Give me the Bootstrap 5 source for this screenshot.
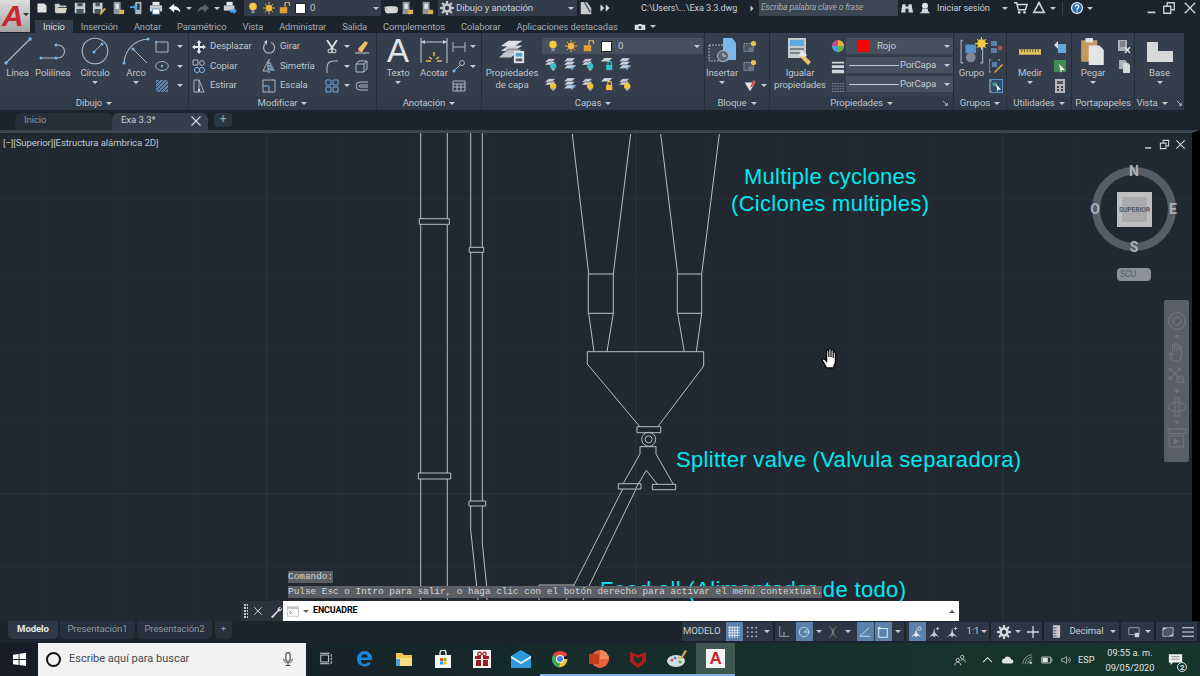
<!DOCTYPE html>
<html lang="es">
<head>
<meta charset="UTF-8">
<title>Exa 3.3 - AutoCAD</title>
<link rel="stylesheet" href="https://cdn.jsdelivr.net/npm/bootstrap@5.3.0/dist/css/bootstrap.min.css">
<style>
html,body{height:676px;overflow:hidden;background:#1c232c}
body{font:9.6px Roboto,sans-serif;letter-spacing:-.1px;color:#bfc5cd;line-height:1.1}
.app-shell{height:676px;width:1200px}
svg{display:block;flex:none}
.tic{width:14px;height:14px}
.tic-s{width:12px;height:12px}
.tic-b{width:28px;height:28px}
.caret{width:0;height:0;border:3px solid transparent;border-top:3.5px solid #c6ccd3;border-bottom:0;flex:none}
/* title bar */
.title-row{height:16px;background:#1c232c;padding-left:32px}
.app-btn{position:absolute;left:0;top:0;width:30px;height:32px;background:linear-gradient(#dcdcdc,#a4a4a4);z-index:3;font:italic 700 30px/31px "Liberation Sans",sans-serif;color:#c8262c;padding-left:2px}
.app-btn .caret{position:absolute;right:1px;top:13px;border-top-color:#333}
.qat-i{width:19px;height:16px}
.qat-c{width:10px}
.qat-r{width:18px}
.qat-p{width:16px}
.layer-mini{width:137px;height:16px;background:#333c4a;padding:0 2px 0 0;margin-left:6px}
.layer-mini .swatch,.layer-combo .swatch{width:11px;height:11px;background:#fff;border:1px solid #222}
.ws-combo{width:139px;height:16px;background:#333c4a;font-size:9.6px;color:#c7ccd3;margin-left:4px;padding:0 3px 0 2px;gap:2px}
.file-name{width:108px;margin-left:30px;font-size:9.1px;color:#c9ced4;white-space:nowrap}
.search-box{width:139px;height:16px;background:#3c4553;font:italic 8.5px Roboto,sans-serif;color:#a7adb5;padding:2px 0 0 2px;margin-left:4px}
.login-txt{font-size:9.2px;color:#c9ced4;width:54px;white-space:nowrap;margin-left:6px}
.v-sep{width:1px;height:13px;background:#39424f}
/* ribbon tabs */
.tab-row{height:17px;background:#1c232c;padding:4px 0 0 35px}
.rib-tab{height:13px;padding:0 8px;color:#a4abb4;font-size:9.3px;line-height:13px;white-space:nowrap}
.rib-tab.is-on{background:#343e4c;color:#d6dbe1}
/* ribbon */
.ribbon{height:77px;width:1184px;background:#343e4c}
.rib-panel{height:77px;border-right:1px solid #252d38;flex:none}
.rib-body{height:64px;padding-top:4px}
.rib-title{height:13px;background:#303a48;color:#bfc5cd;white-space:nowrap}
.rib-title .caret{margin-left:4px}
.big-tool{flex:none;text-align:center;color:#bfc5cd;white-space:nowrap}
.big-ico{height:30px}
.big-lbl{height:12px;line-height:12px}
.big-tool .caret{margin:2px auto 0}
.small-rows{display:flex;flex-direction:column;flex:none}
.small-row{height:19.5px;white-space:nowrap}
.w-dibujo{width:189px}.w-modif{width:188px}.w-anot{width:105px}.w-capas{width:223px}.w-bloque{width:65px}
.w-props{width:184px}.w-grupos{width:53px}.w-util{width:65px}.w-clip{width:63px}.w-vista{width:49px}
.col34{width:35px}.col36{width:35px}.col50{width:50px}.col32{width:32px}
.col46{width:46px}.col60{width:60px}.col66{width:62px}.col30{width:30px}
.col42{width:42px}.col18{width:18px}.col-ins{width:34px}
.lead-14{margin-left:14px}
.lead-11{margin-left:11px}
.lead-8{margin-left:8px}
.lead-7{margin-left:7px}
.lead-6{margin-left:6px}
.lead-5{margin-left:5px}
.lead-4{margin-left:4px}
.lead-3{margin-left:3px}
.lead-2{margin-left:2px}
.gap-cap{gap:5px}
.layer-combo{width:161px;height:16px;background:#46505f;margin:1px 0 3px;padding:0 3px 0 5px;gap:6px;color:#c7ccd3}
.layer-grid{display:grid;grid-template-columns:repeat(5,18.6px);row-gap:6px;padding-left:2px}
.prop-combos{padding-top:1px}
.prop-combo{width:107px;height:16px;background:#46505f;color:#c7ccd3;margin-bottom:3px;padding:0 3px}
.prop-line{width:50px;height:1px;background:#c9ced4;flex:none;margin-right:1px}
.hl-box{background:#2f4e6e;border:1px solid #5b8ec4}
/* file tabs */
.file-row{height:20px;background:#1c232c;padding:3px 0 0 15px}
.file-tab{height:17px;padding:2px 0 0 9px;color:#8e95a0;border-radius:6px 6px 0 0}
.file-tab.tab-home{width:97px;background:#262e39}
.file-tab.tab-on{width:96px;background:#343e4c;color:#c7ccd3;padding-left:9px;padding-right:6px}
.add-tab{width:18px;height:14px;background:#2b3441;margin-left:6px;border-radius:4px;color:#9aa1ab;font-size:12px;line-height:13px;text-align:center}
/* canvas */
.cad-view{height:491px;width:1200px;background:#212830;border-right:8px solid #000;border-top:3px solid #3a4452;overflow:hidden}
.cad-svg{position:absolute;left:0;top:-3px}
.view-label{position:absolute;left:3px;top:5px;color:#c2c6cb;white-space:nowrap}
.view-ctrls{position:absolute;left:1143px;top:6px;gap:5px}
.cube-wrap{position:absolute;left:1088px;top:30px}
.scu-pill{position:absolute;left:1117px;top:135px;width:34px;height:13px;border-radius:4px;background:#8b909b;color:#595e68;font-size:8.5px;line-height:13px;padding-left:3px}
.nav-strip{position:absolute;left:1164px;top:167px;width:25px;height:162px;background:#5a5f67;border-radius:2px;padding-top:11px;gap:4px}
.nav-strip .caret{border-top-color:#6f747a}
.cmd-hist{position:absolute;left:288px;bottom:23px;font:9.4px/12px "Liberation Mono",monospace;letter-spacing:0;color:#d3d5d7;white-space:nowrap}
.cmd-line{background:#5b5f63;width:max-content;margin-top:3px;height:12px}
.cmd-bar{position:absolute;left:241px;bottom:0;height:20px;width:718px}
.cmd-tools{width:42px;background:#2c333d;padding-left:3px;gap:5px}
.grip{width:4px;height:14px;background-image:radial-gradient(circle at 1px 1px,#c9ced4 .7px,transparent 1px);background-size:3px 3px}
.cmd-input{flex:1;background:#fff;color:#000;font-size:8.9px;font-weight:700;padding:0 4px}
.cmd-input .dim-c{border-top-color:#666}
.cmd-input .up-c{transform:rotate(180deg);border-top-color:#555}
/* layout + status */
.bottom-row{height:22px;background:#1c232c;padding-left:8px}
.lay-tab{height:18px;margin-right:2px;padding:3px 0 0;border-radius:0 0 5px 5px;background:#262f3b;color:#8e95a0;white-space:nowrap;text-align:center}
.lay-tab.is-on{background:#2e3846;color:#e6e8ea;font-weight:700;width:50px}
.lay-tab.w-p{width:75px}
.lay-tab.w-add{width:17px;margin-left:1px}
.status-bar{position:absolute;left:682px;top:1px;height:19px;gap:2px}
.sb-group{height:19px;background:#2d3644;color:#c7ccd3;padding:0 1px;gap:1px;white-space:nowrap}
.sb-i{width:17px;height:19px}
.sb-i.on{background:#5b80ac}
.sb-c{width:10px;height:19px}
.sb-c.sb-c-n{width:8px}
/* taskbar */
.taskbar{height:33px;background:linear-gradient(90deg,#171b27 0,#17252a 30%,#16302b 60%,#16352c 100%)}
.start-btn{width:38px}
.find-box{width:268px;height:33px;background:#f2f2f2;padding:0 8px;color:#45484c;font-size:11px;letter-spacing:0;white-space:nowrap}
.cortana{width:15px;height:15px;border:2.5px solid #111;border-radius:50%;flex:none}
.task-i{width:39px;height:33px;border-bottom:2px solid transparent}
.task-i.run{border-bottom-color:#7fb4dd}
.task-i.sel{background:#3e5750}
.acad-tile{width:19px;height:19px;background:#f2f2f2;color:#c8262c;font:700 17px/19px "Liberation Sans",sans-serif;text-align:center}
.tray-wrap{margin-left:219px}
.tray-txt{color:#e2e6e4;font-size:9.2px;letter-spacing:0;white-space:nowrap;text-align:center;line-height:15px}
.note-count{right:-4px;bottom:-5px;font-size:8px;line-height:9px;width:10px;height:10px;border:1px solid #e2e6e4;border-radius:50%}
.c-teal{color:#38c0c8}.c-gold{color:#f4c33d}.c-blue{color:#6fb1e6}
.big-a{font:33px/28px "Liberation Sans",sans-serif;letter-spacing:0;color:#e3e5e7}
.swatch-red{width:12px;height:12px;background:#f00;flex:none}
.corner-i{width:7px;height:7px}
.hand-cur{position:absolute;left:821px;top:214px}
.c-right{transform:rotate(-90deg)}
.tight-lbl{margin-top:0}
.prop-icons{padding-top:2px;gap:7px}
.gear-c{color:#c7ccd3}
.gear-w{color:#d6dade}
.mr-gap{margin-left:52px}
</style>
</head>
<body>
<svg class="d-none">
  <symbol id="s-new" viewBox="0 0 16 16"><path d="M2 2h9l3 3v9H2z" fill="#e2e2e2"/></symbol>
  <symbol id="s-open" viewBox="0 0 16 16"><path d="M1 3h5l1 2h7v2H5l-2 6H1z" fill="#c8c8c4"/><path d="M4 8h11l-2 6H2z" fill="#d9d5c5"/></symbol>
  <symbol id="s-save" viewBox="0 0 16 16"><path d="M2 2h12v12H2z" fill="#c5cbd2"/><path d="M5 2h6v4H5zM4 9h8v5H4z" fill="#4a5563"/></symbol>
  <symbol id="s-saveas" viewBox="0 0 16 16"><path d="M1 2h11v12H1z" fill="#c5cbd2"/><path d="M4 2h5v4H4zM3 9h7v5H3z" fill="#4a5563"/><path d="M9 14l5-6 2 1-5 6-2 1z" fill="#e0a63c"/></symbol>
  <symbol id="s-tablet" viewBox="0 0 16 16"><path d="M3 1h8v14H3z" fill="#8d96a1"/><path d="M5 3h4v6H5z" fill="#dfe3e8"/><path d="M9 10h6v5H9z" fill="#d9b35c"/></symbol>
  <symbol id="s-tablet2" viewBox="0 0 16 16"><path d="M6 1h7v14H6z" fill="#aeb6c0"/><path d="M8 3h3v7H8z" fill="#273240"/><path d="M0 6h5V3l4 4-4 4V8H0z" fill="#4ea3dd"/></symbol>
  <symbol id="s-print" viewBox="0 0 16 16"><path d="M4 1h8v4H4z" fill="#e8e8e8"/><path d="M1 5h14v7H1z" fill="#c8cdd4"/><path d="M4 9h8v6H4z" fill="#fff" stroke="#5a92c2"/></symbol>
  <symbol id="s-undo" viewBox="0 0 16 16"><path d="M7 3L1 8l6 5v-3c3 0 5 .5 7 3 0-4-3-7-7-7z" fill="currentColor"/></symbol>
  <symbol id="s-redo" viewBox="0 0 16 16"><path d="M9 3l6 5-6 5v-3c-3 0-5 .5-7 3 0-4 3-7 7-7z" fill="#5a6371"/></symbol>
  <symbol id="s-plot" viewBox="0 0 16 16"><path d="M4 1h7v4H4z" fill="#e8e8e8"/><path d="M1 5h12v6H1z" fill="#c8cdd4"/><path d="M8 10h4V8l4 3.500-4 3.500v-2H8z" fill="#4ea3dd"/></symbol>
  <symbol id="s-bulb" viewBox="0 0 16 16"><circle cx="8" cy="6" r="5" fill="#f7c940"/><path d="M6 11h4v4H6z" fill="#8b97a4"/></symbol>
  <symbol id="s-sun" viewBox="0 0 16 16"><circle cx="8" cy="8" r="4.500" fill="#f3b73c"/><path d="M8 0v3M8 13v3M0 8h3M13 8h3M2.500 2.500l2 2M11.500 11.500l2 2M2.500 13.500l2-2M11.500 4.500l2-2" stroke="#f3b73c" stroke-width="1.300"/></symbol>
  <symbol id="s-lock" viewBox="0 0 16 16"><path d="M1 7h10v8H1z" fill="#e39f36"/><path d="M8 7V3a3 3 0 0 1 6 0v2" fill="none" stroke="#e9b95e" stroke-width="1.600"/></symbol>
  <symbol id="s-teapot" viewBox="0 0 16 16"><path d="M4 6h8a3 3 0 0 1 0 8H6a3 3 0 0 1-2-8z" fill="#d6d6d6"/><path d="M4 8L0 6l3 6zM13 8l3-1-2 5z" fill="#c5c5c5"/></symbol>
  <symbol id="s-gear" viewBox="0 0 16 16"><circle cx="8" cy="8" r="4" fill="none" stroke="currentColor" stroke-width="3"/><path d="M8 0v3M8 13v3M0 8h3M13 8h3M2.300 2.300l2.100 2.100M11.600 11.600l2.100 2.100M2.300 13.700l2.100-2.100M11.600 4.400l2.100-2.100" stroke="currentColor" stroke-width="2.400"/></symbol>
  <symbol id="s-docfold" viewBox="0 0 16 16"><path d="M2 1h7l5 7v7H2z" fill="#c9cbcd"/><path d="M6 1l7 12" stroke="#4a5563" stroke-width="1.500"/></symbol>
  <symbol id="s-ff" viewBox="0 0 16 16"><path d="M2 3l5 5-5 5zM9 3l5 5-5 5z" fill="#d6dade"/></symbol>
  <symbol id="s-binoc" viewBox="0 0 16 16"><path d="M2 3h4v3h4V3h4l2 11h-6V9H6v5H0z" fill="#d6dade"/></symbol>
  <symbol id="s-user" viewBox="0 0 16 16"><circle cx="8" cy="5" r="4" fill="#e0e3e6"/><path d="M4 9h8v3l3 3H1l3-3z" fill="#cfd3d8"/></symbol>
  <symbol id="s-cart" viewBox="0 0 16 16"><path d="M0 2h3l2 8h8l2-6H4" fill="none" stroke="#d6dade" stroke-width="1.600"/><circle cx="6" cy="13" r="1.500" fill="#d6dade"/><circle cx="12" cy="13" r="1.500" fill="#d6dade"/></symbol>
  <symbol id="s-tri" viewBox="0 0 16 16"><path d="M8 2L2 13h12z" fill="none" stroke="#c9d3e0" stroke-width="1.800"/><circle cx="8" cy="2.500" r="1.500" fill="#c9d3e0"/></symbol>
  <symbol id="s-help" viewBox="0 0 16 16"><circle cx="8" cy="8" r="7" fill="#dce6f2"/><circle cx="8" cy="8" r="5.500" fill="#2f6fb0"/><path d="M6 6.500a2 2 0 1 1 3 1.800c-.8.5-1 .8-1 1.700" fill="none" stroke="#fff" stroke-width="1.400"/><path d="M7.300 11h1.400v1.400H7.300z" fill="#fff"/></symbol>
  <symbol id="s-min" viewBox="0 0 16 16"><path d="M3 12h9v2H3z" fill="#cfd3d8"/></symbol>
  <symbol id="s-rest" viewBox="0 0 16 16"><path d="M2 6h8v8H2zM6 5V2h8v8h-3" fill="none" stroke="#cfd3d8" stroke-width="1.500"/></symbol>
  <symbol id="s-close" viewBox="0 0 16 16"><path d="M2 2l12 12M14 2L2 14" stroke="#d6dade" stroke-width="1.500"/></symbol>
  <symbol id="s-cam" viewBox="0 0 16 10"><path d="M1 2h4l1-1h4l1 1h4v7H1z" fill="#d6dade"/><circle cx="8" cy="5.500" r="2" fill="#333"/></symbol>
  <symbol id="s-line" viewBox="0 0 28 28"><path d="M2 26L26 2" stroke="#aeb8c4" stroke-width="1.100"/><circle cx="2" cy="26" r="1.700" fill="#79b7ea"/><circle cx="26" cy="2" r="1.700" fill="#79b7ea"/></symbol>
  <symbol id="s-poly" viewBox="0 0 28 28"><path d="M2 21h17a6.500 6.500 0 0 0 0-13h-2" fill="none" stroke="#aeb8c4" stroke-width="1.100"/><circle cx="2" cy="21" r="1.500" fill="#79b7ea"/><circle cx="17" cy="21" r="1.500" fill="#79b7ea"/><circle cx="17" cy="8" r="1.500" fill="#79b7ea"/></symbol>
  <symbol id="s-circ" viewBox="0 0 28 28"><circle cx="14" cy="14" r="12.800" fill="none" stroke="#aeb8c4" stroke-width="1.100"/><path d="M14 14l7-7" stroke="#aeb8c4"/><circle cx="13" cy="15" r="1.500" fill="#79b7ea"/><circle cx="21" cy="7" r="1.500" fill="#79b7ea"/></symbol>
  <symbol id="s-arc" viewBox="0 0 28 28"><path d="M2 26C3 12 13 3 26 2" fill="none" stroke="#aeb8c4" stroke-width="1.100"/><path d="M11 12l14 14" stroke="#aeb8c4"/><circle cx="2" cy="26" r="1.500" fill="#79b7ea"/><circle cx="11" cy="12" r="1.500" fill="#79b7ea"/><circle cx="26" cy="2" r="1.500" fill="#79b7ea"/></symbol>
  <symbol id="s-rect" viewBox="0 0 14 14"><path d="M1 2h12v10H1z" fill="none" stroke="#aeb8c4"/><circle cx="1" cy="2" r="1.200" fill="#79b7ea"/></symbol>
  <symbol id="s-ell" viewBox="0 0 14 14"><ellipse cx="7" cy="7" rx="6.300" ry="4.500" fill="none" stroke="#aeb8c4"/><circle cx="7" cy="7" r="1.200" fill="#79b7ea"/></symbol>
  <symbol id="s-hatch" viewBox="0 0 14 14"><path d="M1 1h12v12H1z" fill="#5d7fa8"/><path d="M1 5l4-4M1 9l8-8M1 13L13 1M5 13l8-8M9 13l4-4" stroke="#2c3a4a"/></symbol>
  <symbol id="s-move" viewBox="0 0 14 14"><path d="M7 0l2.500 3H8v3h3V4.500L14 7l-3 2.500V8H8v3h1.500L7 14l-2.500-3H6V8H3v1.500L0 7l3-2.500V6h3V3H4.500z" fill="#e4e7ea"/></symbol>
  <symbol id="s-copy" viewBox="0 0 14 14"><path d="M1 1h5v5H1z" fill="none" stroke="#aeb8c4"/><circle cx="10" cy="4" r="2.400" fill="none" stroke="#aeb8c4"/><circle cx="5" cy="11" r="2.600" fill="none" stroke="#79b7ea"/><circle cx="10" cy="11" r="2.600" fill="none" stroke="#79b7ea"/></symbol>
  <symbol id="s-stretch" viewBox="0 0 14 14"><path d="M2 1h5l5 12H2z" fill="none" stroke="#aeb8c4"/><path d="M7 1v12" stroke="#aeb8c4"/><circle cx="7" cy="11" r="1.200" fill="#d8dce0"/></symbol>
  <symbol id="s-rot" viewBox="0 0 14 14"><path d="M9 2.500A5.500 5.500 0 1 1 3 4" fill="none" stroke="#aeb8c4" stroke-width="1.200"/><path d="M5 0l-3 2 3 3z" fill="#c8cdd3"/></symbol>
  <symbol id="s-mirror" viewBox="0 0 14 14"><path d="M6 2L1 12h5z" fill="none" stroke="#aeb8c4"/><path d="M8 2l5 10H8z" fill="#6d8bb0"/><path d="M7 0v14" stroke="#d0d4d8" stroke-dasharray="2 1"/></symbol>
  <symbol id="s-scale" viewBox="0 0 14 14"><path d="M1 1h12v12H1z" fill="none" stroke="#aeb8c4"/><path d="M1 7h6v6" fill="none" stroke="#79b7ea"/></symbol>
  <symbol id="s-sciss" viewBox="0 0 14 14"><path d="M2 0l6 9M12 0L6 9" stroke="#e0e3e6" stroke-width="1.800"/><circle cx="5" cy="11" r="2" fill="none" stroke="#e0e3e6"/><circle cx="9" cy="11" r="2" fill="none" stroke="#e0e3e6"/></symbol>
  <symbol id="s-fillet" viewBox="0 0 14 14"><path d="M2 14V8a6 6 0 0 1 6-6h5" fill="none" stroke="#aeb8c4" stroke-width="1.100"/></symbol>
  <symbol id="s-array" viewBox="0 0 14 14"><path d="M1 1h5v5H1zM8 1h5v5H8zM1 8h5v5H1zM8 8h5v5H8z" fill="none" stroke="#6fa6d8"/></symbol>
  <symbol id="s-erase" viewBox="0 0 14 14"><path d="M3 9l7-8 3 2-6 9H3z" fill="#e9c36b"/><path d="M3 9l3 3H3z" fill="#d9534f"/><path d="M0 13h14" stroke="#c9ced4"/></symbol>
  <symbol id="s-cube" viewBox="0 0 14 14"><path d="M1 5h8v8H1zM1 5l3-3h8l-3 3M9 13l3-3V2" fill="none" stroke="#a9c0d8"/></symbol>
  <symbol id="s-offset" viewBox="0 0 14 14"><path d="M13 3H5a4 4 0 0 0 0 8h8M13 6H5a1 1 0 0 0 0 2h8" fill="none" stroke="#aeb8c4"/></symbol>
  <symbol id="s-acotar" viewBox="0 0 28 28"><path d="M1 1v25M27 1v25" stroke="#c5cad0"/><path d="M1 5h26" stroke="#c5cad0"/><path d="M1 5l4-2v4zM27 5l-4-2v4z" fill="#c5cad0"/><path d="M9 20l3 2M14 15v4M19 20l-3 2M6 24h5M17 24h5" stroke="#eebb47" stroke-width="1.500"/></symbol>
  <symbol id="s-dim" viewBox="0 0 14 14"><path d="M1 2v10M13 2v10M1 7h12" stroke="#aeb8c4"/></symbol>
  <symbol id="s-mlead" viewBox="0 0 14 14"><circle cx="10" cy="4" r="2.500" fill="none" stroke="#aeb8c4"/><path d="M8 6l-5 5" stroke="#aeb8c4"/><circle cx="2" cy="12" r="1.500" fill="#79b7ea"/></symbol>
  <symbol id="s-table" viewBox="0 0 14 14"><path d="M1 2h12v10H1zM1 5h12M1 8h12M5 5v7M9 5v7" fill="none" stroke="#aeb8c4"/></symbol>
  <symbol id="s-layers" viewBox="0 0 30 28"><path d="M3 14L11 8h15l-8 6z" fill="#d0d3d6"/><path d="M3 18L11 12h15l-8 6z" fill="#b3b7bb" stroke="#343e4c" stroke-width=".6"/><path d="M3 9L11 3h15l-8 6z" fill="#e0e2e4"/><path d="M1 21l6-5h13l-6 5z" fill="#c5c8cb"/><path d="M17 14h11v13H17z" fill="#e2e4e6"/><path d="M19 16h7v4h-7z" fill="#4ea3dd"/><path d="M19 22h7v3h-7z" fill="#555"/></symbol>
  <symbol id="s-ly" viewBox="0 0 16 16"><path d="M1 6l4-4h8l-4 4zM1 9l4-4h8l-4 4z" fill="#d0d3d6" stroke="#343e4c" stroke-width=".4"/><circle cx="10.500" cy="10.500" r="3.600" fill="currentColor"/><path d="M9 13h3v2.500H9z" fill="#aab3bd"/></symbol>
  <symbol id="s-lyb" viewBox="0 0 16 16"><path d="M1 5l4-4h9l-4 4zM1 9l4-4h9l-4 4zM1 13l4-4h9l-4 4z" fill="#c4d4e4" stroke="#343e4c" stroke-width=".4"/><path d="M9 14l5-5 1 1-5 5z" fill="#6fb1e6"/></symbol>
  <symbol id="s-ylk" viewBox="0 0 16 16"><path d="M1 5l4-4h9l-4 4z" fill="#d0d3d6"/><path d="M7 9h7v6H7z" fill="currentColor"/><path d="M9 9V7a2 2 0 0 1 4 0v2" fill="none" stroke="currentColor" stroke-width="1.300"/></symbol>
  <symbol id="s-insert" viewBox="0 0 28 28"><path d="M1 8h18v16H1z" fill="#3e4754" stroke="#aeb4bb" stroke-dasharray="2 1"/><path d="M15 1h9l4 5v17H15z" fill="#7ab8ec"/><circle cx="15" cy="19" r="5.500" fill="#5a6472" stroke="#aeb4bb"/><path d="M15 16v3h3" stroke="#d0d4d8" fill="none"/></symbol>
  <symbol id="s-blk" viewBox="0 0 16 16"><path d="M1 4h11v9H1z" fill="#4a5461" stroke="#aeb4bb" stroke-dasharray="1.500 1"/><circle cx="9" cy="11" r="3" fill="#6a7482"/><circle cx="12" cy="4" r="3" fill="#ecc24c"/></symbol>
  <symbol id="s-blkw" viewBox="0 0 16 16"><path d="M2 4h12L8 14z" fill="#e0e2e4"/><path d="M12 1l3 2-5 6H8z" fill="#d9534f"/></symbol>
  <symbol id="s-match" viewBox="0 0 26 28"><path d="M1 1h18v20H1z" fill="#c6cacd"/><path d="M3 3h14v6H3z" fill="#5ea9de"/><path d="M3 11h14v2H3zM3 15h14v2H3z" fill="#7b8288"/><path d="M15 16l9 9-3 3-9-9z" fill="#e9c36b"/><path d="M12 19l2-6 6 5-2 2z" fill="#e8e8e8"/></symbol>
  <symbol id="s-wheel" viewBox="0 0 16 16"><path d="M8 8V1a7 7 0 0 1 7 7z" fill="#e8b13a"/><path d="M8 8h7a7 7 0 0 1-7 7z" fill="#65b54a"/><path d="M8 8v7a7 7 0 0 1-7-7z" fill="#3fa5d8"/><path d="M8 8H1a7 7 0 0 1 7-7z" fill="#c74a8d"/></symbol>
  <symbol id="s-lw" viewBox="0 0 16 16"><path d="M1 2h14v2H1zM1 6h14v3H1zM1 11h14v4H1z" fill="#d4d7da"/></symbol>
  <symbol id="s-lt" viewBox="0 0 16 16"><path d="M1 3h14M1 6h14M1 9h14M1 12h14" stroke="#8d96a1" stroke-dasharray="2 1"/></symbol>
  <symbol id="s-group" viewBox="0 0 26 26"><path d="M3 3H1v21h2M19 3h2v21h-2" fill="none" stroke="#aeb4bb"/><path d="M5 7h10v8H5z" fill="#5a90c4"/><circle cx="10" cy="19" r="4.500" fill="#7f8994"/><circle cx="20" cy="6" r="4" fill="#f0c93f"/><path d="M20 0v12M14 6h12M16 2l8 8M16 10l8-8" stroke="#f0c93f"/></symbol>
  <symbol id="s-g1" viewBox="0 0 14 14"><path d="M2 1h6v5H2zM2 8h6v5H2z" fill="#5a7ea6"/><path d="M9 6l4 4M13 6l-4 4" stroke="#d9534f" stroke-width="1.400"/></symbol>
  <symbol id="s-g2" viewBox="0 0 14 14"><path d="M2 1H0v12h2M9 1h2" fill="none" stroke="#aeb8c4"/><path d="M3 3h5v5H3z" fill="#5a7ea6"/><path d="M5 13l8-8 1 1-8 8z" fill="#e9a63c"/></symbol>
  <symbol id="s-g3" viewBox="0 0 14 14"><path d="M2 1H0v12h2" fill="none" stroke="#aeb8c4"/><path d="M3 3h5v4H3z" fill="#45a08a"/><path d="M7 5l6 6-3 0-1 3z" fill="#fff"/></symbol>
  <symbol id="s-ruler" viewBox="0 0 24 6"><path d="M0 0h24v6H0z" fill="#e2c163"/><path d="M3 0v3M6 0v3M9 0v3M12 0v3M15 0v3M18 0v3M21 0v3" stroke="#5b5030"/></symbol>
  <symbol id="s-u1" viewBox="0 0 14 14"><path d="M5 4h8v9H5z" fill="#69a6d6"/><path d="M1 5l4-4v8z" fill="#d8dce0"/></symbol>
  <symbol id="s-u2" viewBox="0 0 14 14"><path d="M1 1h12v12H1z" fill="#3f8f54"/><path d="M6 5l6 6-3 0-1 3z" fill="#fff"/></symbol>
  <symbol id="s-calc" viewBox="0 0 14 14"><path d="M2 0h10v14H2z" fill="#b4b8bc"/><path d="M4 2h6v3H4z" fill="#555"/><path d="M4 7h2v2H4zM8 7h2v2H8zM4 10h2v2H4zM8 10h2v2H8z" fill="#444"/></symbol>
  <symbol id="s-paste" viewBox="0 0 24 26"><path d="M1 3h15v20H1z" fill="#c69a5e"/><path d="M5 1h7v4H5z" fill="#e6e7e8"/><path d="M8 8h10l4 4v14H8z" fill="#e4e5e6"/></symbol>
  <symbol id="s-cut" viewBox="0 0 14 14"><path d="M1 0h9v11H1z" fill="#aab0b6"/><path d="M3 2h5M3 4h5M3 6h5" stroke="#555"/><path d="M8 7l5 6M13 7l-5 6" stroke="#e2e4e6" stroke-width="1.400"/></symbol>
  <symbol id="s-cp" viewBox="0 0 14 14"><path d="M2 1h6l2 2v7H2z" fill="#aab0b6"/><path d="M6 4h5l2 2v8H6z" fill="#d6d8da"/></symbol>
  <symbol id="s-base" viewBox="0 0 26 20"><path d="M0 0h11v9h15v11H0z" fill="#d8d8d8"/></symbol>
  <symbol id="s-corner" viewBox="0 0 8 8"><path d="M1 1l5 5M6 3v3H3" fill="none" stroke="#c6ccd3"/></symbol>
  <symbol id="s-win" viewBox="0 0 14 14"><path d="M0 2l6-1v5.500H0zM7 .8l7-1v6.700H7zM0 7.500h6V13l-6-1zM7 7.500h7V14l-7-1z" fill="#fff"/></symbol>
  <symbol id="s-mic" viewBox="0 0 14 16"><rect x="4.500" y="0" width="5" height="10" rx="2.500" fill="none" stroke="#444" stroke-width="1.300"/><path d="M2 7a5 5 0 0 0 10 0M7 12v3M4 15h6" fill="none" stroke="#444" stroke-width="1.200"/></symbol>
  <symbol id="s-task" viewBox="0 0 16 14"><path d="M2 3h9v8H2zM1 1h11M1 13h11M14 2v3M14 6v3M14 10v3" fill="none" stroke="#d4d8d8" stroke-width="1.100"/></symbol>
  <symbol id="s-edge" viewBox="0 0 16 16"><path d="M1 8a7 7 0 0 1 14 0v1.500H4.500a3.500 3.500 0 0 0 6.500 2l3 0.500A7 7 0 0 1 1 8zM5 7h6a3 3 0 0 0-6 0z" fill="#1a86d8"/></symbol>
  <symbol id="s-fold" viewBox="0 0 18 16"><path d="M1 2h6l2 2h8v11H1z" fill="#f2c750"/><path d="M1 7h16v8H1z" fill="#fbdf84"/><path d="M1 8h4v7H1z" fill="#4aa8d8"/></symbol>
  <symbol id="s-store" viewBox="0 0 18 18"><path d="M1 5h16v13H1z" fill="#f6f6f6"/><path d="M6 5V3a3 3 0 0 1 6 0v2" fill="none" stroke="#f6f6f6" stroke-width="1.300"/><path d="M6 8h3v3H6z" fill="#f25022"/><path d="M9.500 8h3v3h-3z" fill="#7fba00"/><path d="M6 11.500h3v3H6z" fill="#00a4ef"/><path d="M9.500 11.500h3v3h-3z" fill="#ffb900"/></symbol>
  <symbol id="s-gift" viewBox="0 0 18 18"><path d="M0 0h18v18H0z" fill="#f4f4f4"/><path d="M2 6h14v3H2zM3 10h12v6H3z" fill="#a01822"/><path d="M8 5h2v11H8z" fill="#f4f4f4"/><circle cx="6.500" cy="4" r="1.800" fill="none" stroke="#a01822" stroke-width="1.200"/><circle cx="11.500" cy="4" r="1.800" fill="none" stroke="#a01822" stroke-width="1.200"/></symbol>
  <symbol id="s-mail" viewBox="0 0 20 18"><path d="M0 6l10-6 10 6v12H0z" fill="#2e9ae0"/><path d="M0 6l10 6 10-6v2l-10 6L0 8z" fill="#f2f8fc"/></symbol>
  <symbol id="s-chrome" viewBox="0 0 18 18"><path d="M9 9L2 5a8.500 8.500 0 0 1 14.500 0z" fill="#e0463a"/><path d="M9 9L2 5a8.500 8.500 0 0 0 6 12.500z" fill="#3fa757"/><path d="M9 9h7.500a8.500 8.500 0 0 1-8.500 8.500z" fill="#f8c22e"/><circle cx="9" cy="9" r="4" fill="#fff"/><circle cx="9" cy="9" r="3" fill="#3f85ec"/></symbol>
  <symbol id="s-ppt" viewBox="0 0 20 18"><circle cx="11" cy="9" r="9" fill="#e8603c"/><path d="M11 0a9 9 0 0 1 9 9h-9z" fill="#f08a5a"/><path d="M0 4h10v10H0z" fill="#c43e1c"/></symbol>
  <symbol id="s-mc" viewBox="0 0 18 18"><path d="M1 2l8 3 8-3v10l-8 6-8-6z" fill="#b51c22"/><path d="M5 6l4 2 4-2v5l-4 3-4-3z" fill="#16352c"/></symbol>
  <symbol id="s-paint" viewBox="0 0 20 18"><ellipse cx="9" cy="11" rx="9" ry="6" fill="#d4dde4"/><circle cx="5" cy="10" r="1.500" fill="#d9534f"/><circle cx="8" cy="8" r="1.500" fill="#3f85ec"/><circle cx="12" cy="8" r="1.500" fill="#ecb93c"/><circle cx="13" cy="12" r="1.500" fill="#4aa45a"/><path d="M13 8l5-8 2 1-5 8z" fill="#d6a35c"/></symbol>
  <symbol id="s-people" viewBox="0 0 16 16"><circle cx="5" cy="8" r="2.300" fill="none" stroke="#e2e6e4"/><circle cx="11" cy="4" r="2.300" fill="none" stroke="#e2e6e4"/><path d="M1 15c0-3 2-4 4-4s4 1 4 4M9 9c1-1 2-1.500 3-1.500 2 0 3 1 3 4" fill="none" stroke="#e2e6e4"/></symbol>
  <symbol id="s-chev" viewBox="0 0 12 8"><path d="M1 7l5-5 5 5" fill="none" stroke="#e2e6e4" stroke-width="1.200"/></symbol>
  <symbol id="s-cloud" viewBox="0 0 16 10"><path d="M4 10a3 3 0 0 1 0-6 4.500 4.500 0 0 1 8.500 1A2.500 2.500 0 0 1 13 10z" fill="#e0e4e4"/></symbol>
  <symbol id="s-wifi" viewBox="0 0 14 14"><path d="M1 13a12 12 0 0 1 12-12M4 13a9 9 0 0 1 9-9M7 13a6 6 0 0 1 6-6" fill="none" stroke="#a6b0ac"/><circle cx="11" cy="11" r="1.500" fill="#e2e6e4"/></symbol>
  <symbol id="s-batt" viewBox="0 0 16 10"><path d="M1 1h12v8H1z" fill="none" stroke="#e2e6e4"/><path d="M2 2h7v6H2z" fill="#e2e6e4"/><path d="M14 3h1v4h-1z" fill="#e2e6e4"/></symbol>
  <symbol id="s-vol" viewBox="0 0 16 14"><path d="M1 5h3l4-3v10L4 9H1z" fill="none" stroke="#d0d6d4"/><path d="M10 5a3 3 0 0 1 0 4M12 3a6 6 0 0 1 0 8" fill="none" stroke="#d0d6d4"/></symbol>
  <symbol id="s-note" viewBox="0 0 18 16"><path d="M1 1h16v10H6l-3 3v-3H1z" fill="#eef0ef"/><path d="M4 4h10M4 7h10" stroke="#777"/></symbol>
  <symbol id="s-grid" viewBox="0 0 14 14"><path d="M2 0v14M5 0v14M8 0v14M11 0v14M0 2h14M0 5h14M0 8h14M0 11h14" stroke="#e6edf5"/></symbol>
  <symbol id="s-dots" viewBox="0 0 14 14"><g fill="#d0d5db"><circle cx="2" cy="2" r="1"/><circle cx="7" cy="2" r="1"/><circle cx="12" cy="2" r="1"/><circle cx="2" cy="7" r="1"/><circle cx="7" cy="7" r="1"/><circle cx="12" cy="7" r="1"/><circle cx="2" cy="12" r="1"/><circle cx="7" cy="12" r="1"/><circle cx="12" cy="12" r="1"/></g></symbol>
  <symbol id="s-ortho" viewBox="0 0 14 14"><path d="M2 0v12h11M7 7v5" fill="none" stroke="#aeb4bb"/></symbol>
  <symbol id="s-polar" viewBox="0 0 14 14"><circle cx="7" cy="7" r="5.500" fill="none" stroke="#cfe0f0"/><path d="M7 7h7M7 7l5-4" stroke="#cfe0f0"/></symbol>
  <symbol id="s-snap" viewBox="0 0 14 14"><path d="M3 0l8 14M11 0L3 14" stroke="#6d7783"/><path d="M7 3v8" stroke="#8fb26a"/></symbol>
  <symbol id="s-ang" viewBox="0 0 14 14"><path d="M1 12h12M1 12L12 2" stroke="#dce8f3" fill="none"/></symbol>
  <symbol id="s-sq" viewBox="0 0 14 14"><path d="M2 3h10v10H2z" fill="none" stroke="#dce8f3" stroke-width="1.200"/><path d="M1 1h3v3H1z" fill="#dce8f3"/></symbol>
  <symbol id="s-anno" viewBox="0 0 14 14"><path d="M6 3l1 5 5 5-4-2-2 2-2-2-4 2 5-5z" fill="#e6ecf2"/><circle cx="10" cy="3" r="2" fill="none" stroke="#e6ecf2"/></symbol>
  <symbol id="s-anno2" viewBox="0 0 14 14"><path d="M6 2l1 6 5 5-4-2-2 2-2-2-4 2 5-5z" fill="#c8ccd1"/><path d="M10 1v4M8 3h4" stroke="#c8ccd1"/></symbol>
  <symbol id="s-plus" viewBox="0 0 14 14"><path d="M7 0v14M0 7h14" stroke="#d6dade" stroke-width="1.500"/></symbol>
  <symbol id="s-units" viewBox="0 0 10 14"><path d="M1 0h8v14H1z" fill="#c6cacd"/><path d="M1 3h4M1 6h4M1 9h4M1 12h4" stroke="#555"/></symbol>
  <symbol id="s-wsq" viewBox="0 0 14 14"><path d="M1 2h12v8H1z" fill="none" stroke="#aeb4bb"/><path d="M8 8h5v5H8z" fill="#cfd3d8"/></symbol>
  <symbol id="s-full" viewBox="0 0 14 14"><path d="M1 2h12v10H1z" fill="#4a5462" stroke="#aeb4bb"/><path d="M2 3h3M2 3v2M12 11H9M12 11V9" stroke="#e6e8ea"/></symbol>
  <symbol id="s-menu" viewBox="0 0 14 14"><path d="M0 2h14M0 7h14M0 12h14" stroke="#d6dade" stroke-width="1.300"/></symbol>
  <symbol id="s-wrench" viewBox="0 0 14 14"><path d="M1 13l7-7a3.500 3.500 0 0 1 4-4L10 4l1 1 2-2a3.500 3.500 0 0 1-4 4l-6 7z" fill="#d6dade"/></symbol>
  <symbol id="s-term" viewBox="0 0 14 12"><path d="M0 0h14v12H0z" fill="#bcc2c8"/><path d="M1 3h12v8H1z" fill="#fff"/><path d="M3 5l2 2-2 2" stroke="#555" fill="none"/></symbol>
  <symbol id="s-steer" viewBox="0 0 18 18"><circle cx="9" cy="9" r="7.500" fill="none" stroke="#70757b" stroke-width="1.200"/><circle cx="9" cy="9" r="3.500" fill="none" stroke="#70757b" stroke-width="1.200"/></symbol>
  <symbol id="s-hand" viewBox="0 0 18 18"><path d="M5 17l-3-6c0-1 1-1 2 0l1 1V3c0-1 2-1 2 0v5-6c0-1 2-1 2 0v6-5c0-1 2-1 2 0v5-3c0-1 2-1 2 0v8l-2 4z" fill="none" stroke="#70757b"/></symbol>
  <symbol id="s-zoomx" viewBox="0 0 18 18"><path d="M2 2l10 10M12 2L2 12M2 2h3M2 2v3M12 2H9M12 2v3M2 12v-3M2 12h3" fill="none" stroke="#70757b"/><circle cx="12" cy="12" r="3" fill="none" stroke="#70757b"/><path d="M14 14l3 3" stroke="#70757b"/></symbol>
  <symbol id="s-orbit" viewBox="0 0 18 18"><ellipse cx="9" cy="9" rx="8" ry="4" fill="none" stroke="#70757b"/><path d="M7 1h4v16H7z" fill="none" stroke="#70757b"/></symbol>
  <symbol id="s-show" viewBox="0 0 18 18"><path d="M1 1h16v4H1zM2 7h13v10H2z" fill="none" stroke="#70757b"/><path d="M6 9l5 3-5 3z" fill="#70757b"/></symbol>
  <symbol id="s-hcur" viewBox="0 0 18 20"><path d="M5 19l-4-7c0-1.500 1.500-1.500 2.500-.5L5 13V4c0-1.500 2-1.500 2 0v5V2.500c0-1.500 2-1.500 2 0V9V3.500c0-1.500 2-1.500 2 0V10V5.500c0-1.500 2-1.500 2 0V14l-2 5z" fill="#fff" stroke="#000" stroke-width="1.100"/></symbol>
</svg>

<div class="app-shell d-flex flex-column position-relative">
  <div class="app-btn">A<span class="caret"></span></div>

  <!-- barra de titulo -->
  <div class="title-row d-flex align-items-center">
    <div class="qat-i d-flex align-items-center justify-content-center"><svg class="tic-s"><use href="#s-new"/></svg></div>
    <div class="qat-i d-flex align-items-center justify-content-center"><svg class="tic"><use href="#s-open"/></svg></div>
    <div class="qat-i d-flex align-items-center justify-content-center"><svg class="tic"><use href="#s-save"/></svg></div>
    <div class="qat-i d-flex align-items-center justify-content-center"><svg class="tic"><use href="#s-saveas"/></svg></div>
    <div class="qat-i d-flex align-items-center justify-content-center"><svg class="tic"><use href="#s-tablet"/></svg></div>
    <div class="qat-i d-flex align-items-center justify-content-center"><svg class="tic"><use href="#s-tablet2"/></svg></div>
    <div class="qat-i d-flex align-items-center justify-content-center"><svg class="tic"><use href="#s-print"/></svg></div>
    <div class="qat-i d-flex align-items-center justify-content-center text-white"><svg class="tic"><use href="#s-undo"/></svg></div>
    <div class="qat-c d-flex align-items-center justify-content-center"><span class="caret"></span></div>
    <div class="qat-r d-flex align-items-center justify-content-center"><svg class="tic"><use href="#s-redo"/></svg></div>
    <div class="qat-c d-flex align-items-center justify-content-center"><span class="caret"></span></div>
    <div class="qat-p d-flex align-items-center justify-content-center"><svg class="tic"><use href="#s-plot"/></svg></div>
    <div class="layer-mini d-flex align-items-center gap-1">
      <svg class="tic-s lead-3"><use href="#s-bulb"/></svg>
      <svg class="tic-s"><use href="#s-sun"/></svg>
      <svg class="tic-s"><use href="#s-lock"/></svg>
      <span class="swatch"></span><span class="flex-grow-1">0</span><span class="caret"></span>
    </div>
    <svg class="tic lead-3"><use href="#s-teapot"/></svg>
    <svg class="tic lead-2"><use href="#s-tablet"/></svg>
    <svg class="tic lead-6"><use href="#s-tablet"/></svg>
    <div class="ws-combo d-flex align-items-center">
      <svg class="tic gear-c"><use href="#s-gear"/></svg><span class="flex-grow-1">Dibujo y anotación</span><span class="caret"></span>
    </div>
    <svg class="tic lead-2"><use href="#s-docfold"/></svg>
    <svg class="tic-s lead-6"><use href="#s-ff"/></svg>
    <div class="file-name">C:\Users\...\Exa 3.3.dwg</div>
    <span class="caret c-right"></span>
    <div class="search-box">Escriba palabra clave o frase</div>
    <svg class="tic-s lead-3"><use href="#s-binoc"/></svg>
    <svg class="tic-s lead-6"><use href="#s-user"/></svg>
    <div class="login-txt">Iniciar sesión</div>
    <span class="caret lead-11"></span>
    <svg class="tic lead-6"><use href="#s-cart"/></svg>
    <svg class="tic lead-4"><use href="#s-tri"/></svg>
    <span class="caret lead-4"></span>
    <span class="v-sep lead-6"></span>
    <svg class="tic lead-7"><use href="#s-help"/></svg>
    <span class="caret lead-3"></span>
    <svg class="tic mr-gap"><use href="#s-min"/></svg>
    <svg class="tic lead-3"><use href="#s-rest"/></svg>
    <svg class="tic lead-7"><use href="#s-close"/></svg>
  </div>

  <!-- pestanas de la cinta -->
  <div class="tab-row d-flex">
    <div class="rib-tab is-on">Inicio</div>
    <div class="rib-tab">Inserción</div>
    <div class="rib-tab">Anotar</div>
    <div class="rib-tab">Paramétrico</div>
    <div class="rib-tab">Vista</div>
    <div class="rib-tab">Administrar</div>
    <div class="rib-tab">Salida</div>
    <div class="rib-tab">Complementos</div>
    <div class="rib-tab">Colaborar</div>
    <div class="rib-tab">Aplicaciones destacadas</div>
    <div class="d-flex align-items-center gap-1 lead-8"><svg class="tic-s"><use href="#s-cam"/></svg><span class="caret"></span></div>
  </div>

  <!-- cinta -->
  <div class="ribbon d-flex">
    <div class="rib-panel w-dibujo">
      <div class="rib-body d-flex">
        <div class="big-tool col34"><div class="big-ico d-flex justify-content-center"><svg class="tic-b"><use href="#s-line"/></svg></div><div class="big-lbl">Línea</div></div>
        <div class="big-tool col36"><div class="big-ico d-flex justify-content-center"><svg class="tic-b"><use href="#s-poly"/></svg></div><div class="big-lbl">Polilínea</div></div>
        <div class="big-tool col50"><div class="big-ico d-flex justify-content-center"><svg class="tic-b"><use href="#s-circ"/></svg></div><div class="big-lbl">Círculo</div><span class="caret d-block"></span></div>
        <div class="big-tool col32"><div class="big-ico d-flex justify-content-center"><svg class="tic-b"><use href="#s-arc"/></svg></div><div class="big-lbl">Arco</div><span class="caret d-block"></span></div>
        <div class="small-rows lead-3">
          <div class="small-row d-flex align-items-center gap-2"><svg class="tic"><use href="#s-rect"/></svg><span class="caret"></span></div>
          <div class="small-row d-flex align-items-center gap-2"><svg class="tic"><use href="#s-ell"/></svg><span class="caret"></span></div>
          <div class="small-row d-flex align-items-center gap-2"><svg class="tic"><use href="#s-hatch"/></svg><span class="caret"></span></div>
        </div>
      </div>
      <div class="rib-title d-flex align-items-center justify-content-center">Dibujo<span class="caret"></span></div>
    </div>

    <div class="rib-panel w-modif">
      <div class="rib-body d-flex">
        <div class="small-rows lead-3 col66">
          <div class="small-row d-flex align-items-center gap-1"><svg class="tic"><use href="#s-move"/></svg>Desplazar</div>
          <div class="small-row d-flex align-items-center gap-1"><svg class="tic"><use href="#s-copy"/></svg>Copiar</div>
          <div class="small-row d-flex align-items-center gap-1"><svg class="tic"><use href="#s-stretch"/></svg>Estirar</div>
        </div>
        <div class="small-rows lead-8 col60">
          <div class="small-row d-flex align-items-center gap-1"><svg class="tic"><use href="#s-rot"/></svg>Girar</div>
          <div class="small-row d-flex align-items-center gap-1"><svg class="tic"><use href="#s-mirror"/></svg>Simetría</div>
          <div class="small-row d-flex align-items-center gap-1"><svg class="tic"><use href="#s-scale"/></svg>Escala</div>
        </div>
        <div class="small-rows lead-3">
          <div class="small-row d-flex align-items-center gap-cap"><svg class="tic"><use href="#s-sciss"/></svg><span class="caret"></span><svg class="tic"><use href="#s-erase"/></svg></div>
          <div class="small-row d-flex align-items-center gap-cap"><svg class="tic"><use href="#s-fillet"/></svg><span class="caret"></span><svg class="tic"><use href="#s-cube"/></svg></div>
          <div class="small-row d-flex align-items-center gap-cap"><svg class="tic"><use href="#s-array"/></svg><span class="caret"></span><svg class="tic"><use href="#s-offset"/></svg></div>
        </div>
      </div>
      <div class="rib-title d-flex align-items-center justify-content-center">Modificar<span class="caret"></span></div>
    </div>

    <div class="rib-panel w-anot">
      <div class="rib-body d-flex">
        <div class="big-tool col42">
          <div class="big-ico big-a text-center">A</div>
          <div class="big-lbl">Texto</div><span class="caret d-block"></span>
        </div>
        <div class="big-tool col30"><div class="big-ico d-flex justify-content-center"><svg class="tic-b"><use href="#s-acotar"/></svg></div><div class="big-lbl">Acotar</div></div>
        <div class="small-rows lead-3">
          <div class="small-row d-flex align-items-center gap-1"><svg class="tic"><use href="#s-dim"/></svg><span class="caret"></span></div>
          <div class="small-row d-flex align-items-center gap-1"><svg class="tic"><use href="#s-mlead"/></svg><span class="caret"></span></div>
          <div class="small-row d-flex align-items-center gap-1"><svg class="tic"><use href="#s-table"/></svg></div>
        </div>
      </div>
      <div class="rib-title d-flex align-items-center justify-content-center">Anotación<span class="caret"></span></div>
    </div>

    <div class="rib-panel w-capas">
      <div class="rib-body d-flex">
        <div class="big-tool col60">
          <div class="big-ico d-flex justify-content-center"><svg class="tic-b"><use href="#s-layers"/></svg></div>
          <div class="big-lbl">Propiedades</div><div class="big-lbl tight-lbl">de capa</div>
        </div>
        <div>
          <div class="layer-combo d-flex align-items-center">
            <svg class="tic-s"><use href="#s-bulb"/></svg><svg class="tic-s"><use href="#s-sun"/></svg><svg class="tic-s"><use href="#s-lock"/></svg>
            <span class="swatch"></span><span class="flex-grow-1">0</span><span class="caret"></span>
          </div>
          <div class="layer-grid">
            <svg class="tic c-teal"><use href="#s-ly"/></svg><svg class="tic"><use href="#s-lyb"/></svg><svg class="tic c-teal"><use href="#s-ly"/></svg><svg class="tic c-teal"><use href="#s-ylk"/></svg><svg class="tic"><use href="#s-lyb"/></svg>
            <svg class="tic c-gold"><use href="#s-ly"/></svg><svg class="tic"><use href="#s-lyb"/></svg><svg class="tic c-gold"><use href="#s-ly"/></svg><svg class="tic c-gold"><use href="#s-ylk"/></svg><svg class="tic c-gold"><use href="#s-ly"/></svg>
          </div>
        </div>
      </div>
      <div class="rib-title d-flex align-items-center justify-content-center">Capas<span class="caret"></span></div>
    </div>

    <div class="rib-panel w-bloque">
      <div class="rib-body d-flex">
        <div class="big-tool col-ins"><div class="big-ico d-flex justify-content-center"><svg class="tic-b"><use href="#s-insert"/></svg></div><div class="big-lbl">Insertar</div><span class="caret d-block"></span></div>
        <div class="small-rows ms-1">
          <div class="small-row d-flex align-items-center"><svg class="tic"><use href="#s-blk"/></svg></div>
          <div class="small-row d-flex align-items-center"><svg class="tic"><use href="#s-blk"/></svg></div>
          <div class="small-row d-flex align-items-center gap-1"><svg class="tic"><use href="#s-blkw"/></svg><span class="caret"></span></div>
        </div>
      </div>
      <div class="rib-title d-flex align-items-center justify-content-center">Bloque<span class="caret"></span></div>
    </div>

    <div class="rib-panel w-props">
      <div class="rib-body d-flex">
        <div class="big-tool col60">
          <div class="big-ico d-flex justify-content-center"><svg class="tic-b"><use href="#s-match"/></svg></div>
          <div class="big-lbl">Igualar</div><div class="big-lbl tight-lbl">propiedades</div>
        </div>
        <div class="d-flex flex-column align-items-center col18 prop-icons">
          <svg class="tic"><use href="#s-wheel"/></svg>
          <svg class="tic"><use href="#s-lw"/></svg>
          <svg class="tic"><use href="#s-lt"/></svg>
        </div>
        <div class="prop-combos">
          <div class="prop-combo d-flex align-items-center"><span class="ms-2 swatch-red"></span><span class="flex-grow-1 ms-2">Rojo</span><span class="caret"></span></div>
          <div class="prop-combo d-flex align-items-center"><span class="prop-line"></span><span class="flex-grow-1">PorCapa</span><span class="caret"></span></div>
          <div class="prop-combo d-flex align-items-center"><span class="prop-line"></span><span class="flex-grow-1">PorCapa</span><span class="caret"></span></div>
        </div>
      </div>
      <div class="rib-title d-flex align-items-center justify-content-center position-relative">Propiedades<span class="caret"></span><svg class="corner-i position-absolute end-0 me-1"><use href="#s-corner"/></svg></div>
    </div>

    <div class="rib-panel w-grupos">
      <div class="rib-body d-flex">
        <div class="big-tool col34"><div class="big-ico d-flex justify-content-center"><svg class="tic-b ms-1"><use href="#s-group"/></svg></div><div class="big-lbl">Grupo</div></div>
        <div class="small-rows">
          <div class="small-row d-flex align-items-center"><svg class="tic"><use href="#s-g1"/></svg></div>
          <div class="small-row d-flex align-items-center"><svg class="tic"><use href="#s-g2"/></svg></div>
          <div class="small-row d-flex align-items-center"><svg class="tic hl-box"><use href="#s-g3"/></svg></div>
        </div>
      </div>
      <div class="rib-title d-flex align-items-center justify-content-center">Grupos<span class="caret"></span></div>
    </div>

    <div class="rib-panel w-util">
      <div class="rib-body d-flex">
        <div class="big-tool col46">
          <div class="big-ico d-flex justify-content-center align-items-center"><svg width="22" height="6"><use href="#s-ruler"/></svg></div>
          <div class="big-lbl">Medir</div><span class="caret d-block"></span>
        </div>
        <div class="small-rows">
          <div class="small-row d-flex align-items-center"><svg class="tic"><use href="#s-u1"/></svg></div>
          <div class="small-row d-flex align-items-center"><svg class="tic"><use href="#s-u2"/></svg></div>
          <div class="small-row d-flex align-items-center"><svg class="tic"><use href="#s-calc"/></svg></div>
        </div>
      </div>
      <div class="rib-title d-flex align-items-center justify-content-center">Utilidades<span class="caret"></span></div>
    </div>

    <div class="rib-panel w-clip">
      <div class="rib-body d-flex">
        <div class="big-tool col42"><div class="big-ico d-flex justify-content-center"><svg class="tic-b"><use href="#s-paste"/></svg></div><div class="big-lbl">Pegar</div><span class="caret d-block"></span></div>
        <div class="small-rows lead-3">
          <div class="small-row d-flex align-items-center"><svg class="tic"><use href="#s-cut"/></svg></div>
          <div class="small-row d-flex align-items-center"><svg class="tic"><use href="#s-cp"/></svg></div>
        </div>
      </div>
      <div class="rib-title d-flex align-items-center justify-content-center">Portapapeles</div>
    </div>

    <div class="rib-panel w-vista border-0">
      <div class="rib-body d-flex">
        <div class="big-tool w-100"><div class="big-ico d-flex justify-content-center align-items-center"><svg width="26" height="20"><use href="#s-base"/></svg></div><div class="big-lbl">Base</div><span class="caret d-block"></span></div>
      </div>
      <div class="rib-title d-flex align-items-center justify-content-center">Vista<span class="caret"></span><svg class="ms-2 corner-i"><use href="#s-corner"/></svg></div>
    </div>
  </div>

  <!-- archivos abiertos -->
  <div class="file-row d-flex">
    <div class="file-tab tab-home">Inicio</div>
    <div class="file-tab tab-on d-flex justify-content-between"><span>Exa 3.3*</span><svg class="tic-s"><use href="#s-close"/></svg></div>
    <div class="add-tab">+</div>
  </div>

  <!-- area de dibujo -->
  <div class="cad-view position-relative">
    <svg class="cad-svg" width="1192" height="491" viewBox="0 130 1192 491">
      <g stroke="#262d36" stroke-width="1">
        <path d="M1077 130v491M930 130v491M856 130v491M783 130v491M709 130v491M562 130v491M488 130v491M415 130v491M341 130v491M194 130v491M120 130v491M47 130v491"/>
        <path d="M0 199.500h1192M0 273h1192M0 347h1192M0 420h1192M0 567.500h1192"/>
      </g>
      <path d="M635.700 130v491M1003 130v491M267 130v491M0 494h1192" stroke="#2f3640"/>
      <g fill="none" stroke="#bcc0c3" stroke-width="1">
        <path d="M420.700 133V218.700M447.300 133V218.700M420.700 224.300V473M447.300 224.300V473M420.700 479V600M447.300 479V600"/>
        <path d="M419.300 218.700h30v5.600h-30zM418.300 473h32.400v6h-32.400z"/>
        <path d="M470.700 133V247.300M482.300 133V247.300M470.700 252.300V501M482.300 252.300V501"/>
        <path d="M469.300 247.300h14.400v5h-14.400zM469 501h16.700v5H469z"/>
        <path d="M470.700 506V530L476.700 586.700 478 600M482.300 506V543L486.700 586.700 487 600"/>
        <path d="M572.300 134L588.700 274M630.700 134L613.300 274M588.300 274h25v39.300h-25zM588.700 313.300L594 351.700M613.300 313.300L607 351.700"/>
        <path d="M660.700 134L677.700 274M719.300 134L701.700 274M677.300 274h24.400v39.300h-24.400zM677.700 313.300L684.300 351.700M701.700 313.300L696.300 351.700"/>
        <path d="M587.300 351.700h116.400V366L658.300 426M587.300 351.700V364L639.300 426"/>
        <path d="M637 426.700h23.700v6H637z"/>
        <circle cx="648.700" cy="439.300" r="7"/><circle cx="648.700" cy="439.300" r="3.500"/>
        <path d="M623.300 483.300L640 454V446.700H656V454L673.300 484.300"/>
        <path d="M636 488L646.300 470.300 657.300 484.300"/>
        <path d="M618.300 483.700H641V489H618.300zM652.300 484.300h23.400v5.400h-23.400z"/>
        <path d="M622.700 489L574 585 566 600M636 489L588.700 586.700 583 600"/>
        <path d="M574 585H539V600"/>
      </g>
      <g fill="#00e8f0" font-family="Liberation Sans, sans-serif" font-size="22" letter-spacing="0">
        <text x="744" y="184" textLength="172">Multiple cyclones</text>
        <text x="731" y="211" textLength="198">(Ciclones multiples)</text>
        <text x="676" y="467" textLength="345">Splitter valve (Valvula separadora)</text>
        <text x="600" y="597" textLength="306">Feed all (Alimentador de todo)</text>
      </g>
    </svg>

    <div class="view-label">[−][Superior][Estructura alámbrica 2D]</div>
    <div class="view-ctrls d-flex"><svg width="11" height="11"><use href="#s-min"/></svg><svg width="11" height="11"><use href="#s-rest"/></svg><svg width="11" height="11"><use href="#s-close"/></svg></div>

    <svg class="cube-wrap" width="92" height="92" viewBox="0 0 92 92">
      <circle cx="46" cy="46" r="38" fill="none" stroke="#575d65" stroke-width="8"/>
      <path d="M29 29h35v35H29z" fill="#bdbfc0"/><path d="M34 34h25v25H34z" fill="#a9abad"/>
      <text x="46.500" y="49" text-anchor="middle" font-family="Roboto, sans-serif" font-weight="700" font-size="8" fill="#565a5e" textLength="31" lengthAdjust="spacingAndGlyphs">SUPERIOR</text>
      <g font-family="Roboto, sans-serif" font-weight="700" font-size="14" fill="#adb1b6" text-anchor="middle">
        <text x="46" y="13">N</text><text x="46" y="89">S</text><text x="85" y="51">E</text><text x="7" y="51">O</text>
      </g>
    </svg>
    <div class="scu-pill">SCU</div>

    <div class="nav-strip d-flex flex-column align-items-center">
      <svg width="20" height="20"><use href="#s-steer"/></svg>
      <span class="caret"></span>
      <svg width="20" height="20"><use href="#s-hand"/></svg>
      <svg width="20" height="20"><use href="#s-zoomx"/></svg>
      <span class="caret"></span>
      <svg width="20" height="20"><use href="#s-orbit"/></svg>
      <span class="caret"></span>
      <svg width="20" height="20"><use href="#s-show"/></svg>
    </div>

    <svg class="hand-cur" width="20" height="22"><use href="#s-hcur"/></svg>

    <div class="cmd-hist">
      <div class="cmd-line">Comando:</div>
      <div class="cmd-line">Pulse Esc o Intro para salir, o haga clic con el botón derecho para activar el menú contextual.</div>
    </div>
    <div class="cmd-bar d-flex">
      <div class="cmd-tools d-flex align-items-center">
        <span class="grip"></span>
        <svg width="10" height="10"><use href="#s-close"/></svg>
        <svg class="lead-2" width="13" height="13"><use href="#s-wrench"/></svg>
      </div>
      <div class="cmd-input d-flex align-items-center gap-1">
        <svg width="12" height="11"><use href="#s-term"/></svg><span class="caret dim-c"></span>
        <span class="flex-grow-1">ENCUADRE</span>
        <span class="caret up-c"></span>
      </div>
    </div>
  </div>

  <!-- presentaciones y barra de estado -->
  <div class="bottom-row d-flex position-relative">
    <div class="lay-tab is-on">Modelo</div>
    <div class="lay-tab w-p">Presentación1</div>
    <div class="lay-tab w-p">Presentación2</div>
    <div class="lay-tab w-add">+</div>
    <div class="status-bar d-flex">
      <div class="sb-group d-flex align-items-center">MODELO
        <span class="sb-i on d-flex align-items-center justify-content-center ms-1"><svg class="tic-s"><use href="#s-grid"/></svg></span>
        <span class="sb-i d-flex align-items-center justify-content-center"><svg class="tic-s"><use href="#s-dots"/></svg></span>
        <span class="sb-c d-flex align-items-center justify-content-center"><span class="caret"></span></span>
      </div>
      <div class="sb-group d-flex align-items-center">
        <span class="sb-i d-flex align-items-center justify-content-center"><svg class="tic-s"><use href="#s-ortho"/></svg></span>
        <span class="sb-i on d-flex align-items-center justify-content-center lead-2"><svg class="tic-s"><use href="#s-polar"/></svg></span>
        <span class="sb-c d-flex align-items-center justify-content-center"><span class="caret"></span></span>
        <span class="sb-i d-flex align-items-center justify-content-center"><svg class="tic-s"><use href="#s-snap"/></svg></span>
        <span class="sb-c d-flex align-items-center justify-content-center"><span class="caret"></span></span>
        <span class="sb-i on d-flex align-items-center justify-content-center lead-3"><svg class="tic-s"><use href="#s-ang"/></svg></span>
        <span class="sb-i on d-flex align-items-center justify-content-center"><svg class="tic-s"><use href="#s-sq"/></svg></span>
        <span class="sb-c d-flex align-items-center justify-content-center"><span class="caret"></span></span>
      </div>
      <div class="sb-group d-flex align-items-center">
        <span class="sb-i on d-flex align-items-center justify-content-center lead-2"><svg class="tic-s"><use href="#s-anno"/></svg></span>
        <span class="sb-i d-flex align-items-center justify-content-center"><svg class="tic-s"><use href="#s-anno2"/></svg></span>
        <span class="sb-i d-flex align-items-center justify-content-center"><svg class="tic-s"><use href="#s-anno2"/></svg></span>
        <span class="ms-1">1:1</span>
        <span class="sb-c sb-c-n d-flex align-items-center justify-content-center"><span class="caret"></span></span>
      </div>
      <div class="sb-group d-flex align-items-center">
        <span class="sb-i d-flex align-items-center justify-content-center gear-w lead-3"><svg class="tic"><use href="#s-gear"/></svg></span>
        <span class="sb-c d-flex align-items-center justify-content-center"><span class="caret"></span></span>
        <span class="sb-i d-flex align-items-center justify-content-center"><svg class="tic-s"><use href="#s-plus"/></svg></span>
      </div>
      <div class="sb-group d-flex align-items-center">
        <span class="sb-i d-flex align-items-center justify-content-center lead-3"><svg width="9" height="13"><use href="#s-units"/></svg></span>
        <span class="lead-3 me-1">Decimal</span>
        <span class="sb-c d-flex align-items-center justify-content-center"><span class="caret"></span></span>
      </div>
      <div class="sb-group d-flex align-items-center">
        <span class="sb-i d-flex align-items-center justify-content-center lead-3"><svg class="tic-s"><use href="#s-wsq"/></svg></span>
        <span class="sb-c d-flex align-items-center justify-content-center"><span class="caret"></span></span>
      </div>
      <div class="sb-group d-flex align-items-center">
        <span class="sb-i d-flex align-items-center justify-content-center lead-2"><svg class="tic-s"><use href="#s-full"/></svg></span>
        <span class="sb-i d-flex align-items-center justify-content-center lead-2"><svg class="tic-s"><use href="#s-menu"/></svg></span>
      </div>
    </div>
  </div>

  <!-- barra de tareas -->
  <div class="taskbar d-flex align-items-center">
    <div class="start-btn d-flex justify-content-center"><svg width="13" height="13"><use href="#s-win"/></svg></div>
    <div class="find-box d-flex align-items-center">
      <span class="cortana me-2"></span>
      <span class="flex-grow-1">Escribe aquí para buscar</span>
      <svg width="12" height="15" class="me-1"><use href="#s-mic"/></svg>
    </div>
    <div class="task-i d-flex align-items-center justify-content-center"><svg width="14" height="13"><use href="#s-task"/></svg></div>
    <div class="task-i d-flex align-items-center justify-content-center"><svg width="17" height="17"><use href="#s-edge"/></svg></div>
    <div class="task-i d-flex align-items-center justify-content-center"><svg width="18" height="16"><use href="#s-fold"/></svg></div>
    <div class="task-i d-flex align-items-center justify-content-center"><svg width="18" height="18"><use href="#s-store"/></svg></div>
    <div class="task-i d-flex align-items-center justify-content-center"><svg width="18" height="18"><use href="#s-gift"/></svg></div>
    <div class="task-i d-flex align-items-center justify-content-center"><svg width="20" height="18"><use href="#s-mail"/></svg></div>
    <div class="task-i run d-flex align-items-center justify-content-center"><svg width="18" height="18"><use href="#s-chrome"/></svg></div>
    <div class="task-i run d-flex align-items-center justify-content-center"><svg width="20" height="18"><use href="#s-ppt"/></svg></div>
    <div class="task-i run d-flex align-items-center justify-content-center"><svg width="18" height="18"><use href="#s-mc"/></svg></div>
    <div class="task-i run d-flex align-items-center justify-content-center"><svg width="20" height="18"><use href="#s-paint"/></svg></div>
    <div class="task-i run sel d-flex align-items-center justify-content-center"><span class="acad-tile">A</span></div>
    <div class="tray-wrap d-flex align-items-center">
      <svg width="12" height="12"><use href="#s-people"/></svg>
      <svg class="ms-3" width="11" height="7"><use href="#s-chev"/></svg>
      <svg class="ms-2" width="13" height="9"><use href="#s-cloud"/></svg>
      <svg class="ms-2" width="11" height="11"><use href="#s-wifi"/></svg>
      <svg class="ms-2" width="12" height="8"><use href="#s-batt"/></svg>
      <svg class="ms-2" width="11" height="10"><use href="#s-vol"/></svg>
      <span class="tray-txt lead-6">ESP</span>
      <div class="tray-txt lead-11"><div>09:55 a. m.</div><div>09/05/2020</div></div>
      <div class="position-relative lead-14"><svg width="15" height="14"><use href="#s-note"/></svg><span class="position-absolute tray-txt fw-bold note-count">2</span></div>
    </div>
  </div>
</div>

<script src="https://cdn.jsdelivr.net/npm/bootstrap@5.3.0/dist/js/bootstrap.bundle.min.js"></script>
</body>
</html>
